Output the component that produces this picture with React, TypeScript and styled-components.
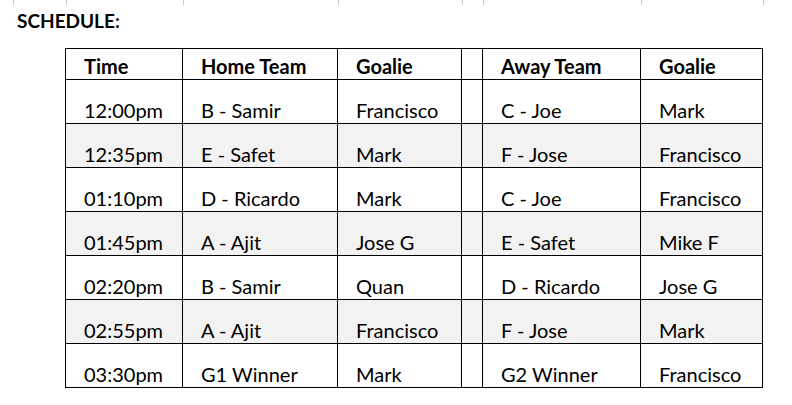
import React from "react";
import styled, { createGlobalStyle } from "styled-components";

const Global = createGlobalStyle`
  html, body { margin: 0; padding: 0; background: #fff; }
  body { font-family: Lato, "Open Sans", sans-serif; color: #000; }
`;

const COLS = "117px 155px 124px 21px 158px 122px";

const Page = styled.div`
  width: 792px;
  height: 405px;
  overflow: hidden;
  display: flex;
  flex-direction: column;
`;

const StubStrip = styled.div`
  display: grid;
  grid-template-columns: 53px ${COLS};
  margin-left: 13px;
  height: 5px;
  width: max-content;
  border-right: 1px solid #c6c6c6;
`;

const Stub = styled.div`
  border-left: 1px solid #c6c6c6;
`;

const Title = styled.h1`
  margin: 4px 0 0 17px;
  font-size: 19px;
  line-height: 24px;
  font-weight: 700;
  letter-spacing: 0;
`;

const Table = styled.div`
  margin: 15px 0 0 65px;
  display: grid;
  grid-template-columns: ${COLS};
  width: max-content;
  border-top: 1px solid #000;
  border-left: 1px solid #000;
`;

const Cell = styled.div<{ $head?: boolean; $shaded?: boolean }>`
  box-sizing: border-box;
  height: ${(p) => (p.$head ? 31 : 44)}px;
  border-right: 1px solid #000;
  border-bottom: 1px solid #000;
  background: ${(p) => (p.$shaded ? "#f2f2f2" : "#fff")};
  display: flex;
  align-items: flex-end;
  padding: 0 0 1px 18px;
  font-size: 20px;
  line-height: 24px;
  font-weight: ${(p) => (p.$head ? 700 : 400)};
  white-space: nowrap;
`;

const headers = ["Time", "Home Team", "Goalie", "", "Away Team", "Goalie"];

const rows = [
  ["12:00pm", "B - Samir", "Francisco", "", "C - Joe", "Mark"],
  ["12:35pm", "E - Safet", "Mark", "", "F - Jose", "Francisco"],
  ["01:10pm", "D - Ricardo", "Mark", "", "C - Joe", "Francisco"],
  ["01:45pm", "A - Ajit", "Jose G", "", "E - Safet", "Mike F"],
  ["02:20pm", "B - Samir", "Quan", "", "D - Ricardo", "Jose G"],
  ["02:55pm", "A - Ajit", "Francisco", "", "F - Jose", "Mark"],
  ["03:30pm", "G1 Winner", "Mark", "", "G2 Winner", "Francisco"],
];

export default function App() {
  return (
    <Page>
      <Global />
      <StubStrip>
        {Array.from({ length: 7 }).map((_, i) => (
          <Stub key={i} />
        ))}
      </StubStrip>
      <Title>SCHEDULE:</Title>
      <Table>
        {headers.map((h, i) => (
          <Cell key={"h" + i} $head>
            {h}
          </Cell>
        ))}
        {rows.map((r, ri) =>
          r.map((c, ci) => (
            <Cell key={ri + "-" + ci} $shaded={ri % 2 === 1}>
              {c}
            </Cell>
          ))
        )}
      </Table>
    </Page>
  );
}
